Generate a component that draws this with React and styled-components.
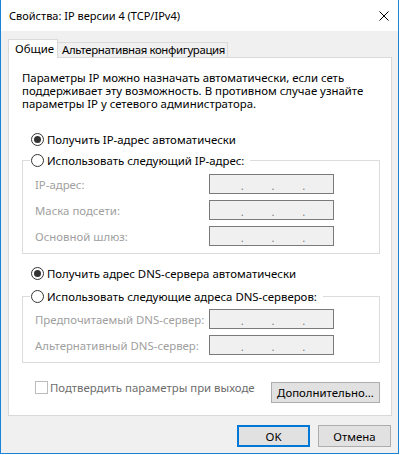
import React from "react";
import styled, { createGlobalStyle } from "styled-components";

const GlobalStyle = createGlobalStyle`
  html, body {
    margin: 0;
    padding: 0;
    background: #ffffff;
  }
  body {
    font-family: "Noto Sans", "Open Sans", sans-serif;
    font-size: 11.4px;
    color: #000000;
  }
  * {
    box-sizing: border-box;
  }
`;

const Window = styled.div`
  width: 399px;
  height: 454px;
  border: 1px solid #1883d7;
  border-top: none;
  background: #f0f0f0;
  display: flex;
  flex-direction: column;
`;

const TitleBar = styled.div`
  height: 31px;
  background: #ffffff;
  display: flex;
  align-items: center;
  justify-content: space-between;
  padding: 0 9px 0 8px;
`;

const Title = styled.div`
  font-size: 11px;
  line-height: 16px;
`;

const Body = styled.div`
  flex: 1;
  display: flex;
  flex-direction: column;
  padding: 8px 6px 0 7px;
`;

const TabStrip = styled.div`
  display: flex;
  align-items: flex-end;
  height: 18px;
`;

const Tab = styled.div`
  position: relative;
  z-index: ${(p) => (p.$active ? 1 : 0)};
  width: ${(p) => p.$width}px;
  height: ${(p) => (p.$active ? 19 : 15)}px;
  margin-bottom: ${(p) => (p.$active ? -1 : 0)}px;
  background: ${(p) => (p.$active ? "#ffffff" : "#f0f0f0")};
  border: 1px solid #d9d9d9;
  border-bottom: none;
  border-left: ${(p) => (p.$active ? "1px solid #d9d9d9" : "none")};
  padding-left: ${(p) => (p.$active ? 6 : 4)}px;
  display: flex;
  align-items: center;
  line-height: 14px;
  letter-spacing: ${(p) => (p.$active ? 0 : -0.35)}px;
  white-space: nowrap;
`;

const Panel = styled.div`
  width: 384px;
  height: 359px;
  background: #ffffff;
  border: 1px solid #d9d9d9;
  display: flex;
  flex-direction: column;
  padding: 13px 11px 0 0;
`;

const Intro = styled.p`
  margin: 0 0 0 13px;
  line-height: 13px;
  white-space: nowrap;
`;

const OptionRow = styled.label`
  display: flex;
  align-items: center;
  height: 15px;
  margin: ${(p) => p.$top || 0}px 0 0 22px;
  line-height: 15px;
  white-space: nowrap;
`;

const RadioCircle = styled.span`
  width: 13px;
  height: 13px;
  border-radius: 50%;
  border: 1px solid #333333;
  background: #ffffff;
  display: flex;
  align-items: center;
  justify-content: center;
  margin-right: 3px;
  flex-shrink: 0;

  &::after {
    content: "";
    width: 7px;
    height: 7px;
    border-radius: 50%;
    background: ${(p) => (p.$checked ? "#333333" : "transparent")};
  }
`;

const Group = styled.fieldset`
  margin: ${(p) => p.$top}px 0 0 13px;
  padding: ${(p) => p.$padTop}px 0 7px 0;
  border: 1px solid #dcdcdc;
  display: flex;
  flex-direction: column;
  gap: 6px;
  min-width: 0;
`;

const Legend = styled.legend`
  margin-left: 7px;
  padding: 0 6px 0 1px;
  display: flex;
  align-items: center;
  height: 15px;
  line-height: 15px;
  white-space: nowrap;
`;

const FieldRow = styled.div`
  display: flex;
  align-items: center;
  height: 20px;
  padding-left: 12px;
`;

const FieldLabel = styled.span`
  width: 174px;
  color: #a0a0a0;
  white-space: nowrap;
`;

const IpBox = styled.div`
  width: 125px;
  height: 20px;
  border: 1px solid #7a7a7a;
  background: #f0f0f0;
  display: flex;
  justify-content: space-evenly;
  align-items: center;
  color: #808080;
  line-height: 14px;
  padding: 3px 0 0 3px;
`;

const BottomRow = styled.div`
  display: flex;
  justify-content: space-between;
  align-items: flex-start;
  margin-top: 17px;
`;

const CheckRow = styled.label`
  display: flex;
  align-items: center;
  height: 15px;
  margin-left: 26px;
  color: #6d6d6d;
  white-space: nowrap;
`;

const CheckBox = styled.span`
  width: 13px;
  height: 13px;
  border: 1px solid #bcbcbc;
  background: #ffffff;
  margin-right: 2px;
  flex-shrink: 0;
`;

const Button = styled.button`
  width: ${(p) => p.$width}px;
  height: ${(p) => p.$height}px;
  margin-top: ${(p) => p.$top || 0}px;
  padding: 0;
  font-family: inherit;
  font-size: 11.4px;
  color: #000000;
  background: #e1e1e1;
  border: 1px solid ${(p) => (p.$default ? "#0078d7" : "#adadad")};
  box-shadow: ${(p) => (p.$default ? "inset 0 0 0 1px #0078d7" : "none")};
  display: flex;
  align-items: center;
  justify-content: center;
  white-space: nowrap;
`;

const ButtonBar = styled.div`
  display: flex;
  justify-content: flex-end;
  gap: 8px;
  margin-top: 9px;
  padding-right: 1px;
`;

const Radio = ({ checked, children }) => (
  <>
    <RadioCircle $checked={checked} />
    <span>{children}</span>
  </>
);

const IpField = ({ label }) => (
  <FieldRow>
    <FieldLabel>{label}</FieldLabel>
    <IpBox>
      <span>.</span>
      <span>.</span>
      <span>.</span>
    </IpBox>
  </FieldRow>
);

const CloseIcon = () => (
  <svg width="10" height="10" viewBox="0 0 10 10">
    <path d="M0.5 0.5 L9.5 9.5 M9.5 0.5 L0.5 9.5" stroke="#000" strokeWidth="1" />
  </svg>
);

export default function App() {
  return (
    <>
      <GlobalStyle />
      <Window>
        <TitleBar>
          <Title>Свойства: IP версии 4 (TCP/IPv4)</Title>
          <CloseIcon />
        </TitleBar>
        <Body>
          <TabStrip>
            <Tab $active $width={50}>Общие</Tab>
            <Tab $width={170}>Альтернативная конфигурация</Tab>
          </TabStrip>
          <Panel>
            <Intro>
              Параметры IP можно назначать автоматически, если сеть
              <br />
              поддерживает эту возможность. В противном случае узнайте
              <br />
              параметры IP у сетевого администратора.
            </Intro>
            <OptionRow $top={22}>
              <Radio checked>Получить IP-адрес автоматически</Radio>
            </OptionRow>
            <Group $top={6} $padTop={6}>
              <Legend>
                <Radio>Использовать следующий IP-адрес:</Radio>
              </Legend>
              <IpField label="IP-адрес:" />
              <IpField label="Маска подсети:" />
              <IpField label="Основной шлюз:" />
            </Group>
            <OptionRow $top={12}>
              <Radio checked>Получить адрес DNS-сервера автоматически</Radio>
            </OptionRow>
            <Group $top={8} $padTop={5}>
              <Legend>
                <Radio>Использовать следующие адреса DNS-серверов:</Radio>
              </Legend>
              <IpField label="Предпочитаемый DNS-сервер:" />
              <IpField label="Альтернативный DNS-сервер:" />
            </Group>
            <BottomRow>
              <CheckRow>
                <CheckBox />
                Подтвердить параметры при выходе
              </CheckRow>
              <Button $width={109} $height={21} $top={2}>
                Дополнительно...
              </Button>
            </BottomRow>
          </Panel>
          <ButtonBar>
            <Button $default $width={73} $height={22}>
              OK
            </Button>
            <Button $width={73} $height={22}>
              Отмена
            </Button>
          </ButtonBar>
        </Body>
      </Window>
    </>
  );
}
